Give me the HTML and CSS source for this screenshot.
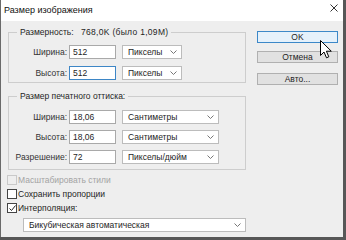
FILE: index.html
```html
<!DOCTYPE html>
<html lang="ru">

<head>
    <meta charset="UTF-8">
    <title>Размер изображения</title>
    <link rel="stylesheet" href="styles.css">
</head>

<body>
    <div class="window">
        <div class="titlebar">
            <span class="title">Размер изображения</span>
            <svg class="close" width="8" height="8" viewBox="0 0 8 8">
                <path d="M0.5 0.5 L7.5 7.5 M7.5 0.5 L0.5 7.5" stroke="#333" stroke-width="1"/>
            </svg>
        </div>

        <div class="content">
            <div class="left">
                <fieldset class="group group-size">
                    <legend><span class="legend-name">Размерность:</span><span class="legend-value">768,0K (было 1,09М)</span></legend>
                    <div class="rows">
                        <label class="lbl">Ширина:</label>
                        <input class="field" type="text" value="512">
                        <div class="select narrow"><span>Пикселы</span><svg width="7" height="4" viewBox="0 0 7 4"><path d="M0.5 0.5 L3.5 3.5 L6.5 0.5" fill="none" stroke="#777"/></svg></div>

                        <label class="lbl">Высота:</label>
                        <input class="field focused" type="text" value="512">
                        <div class="select narrow"><span>Пикселы</span><svg width="7" height="4" viewBox="0 0 7 4"><path d="M0.5 0.5 L3.5 3.5 L6.5 0.5" fill="none" stroke="#777"/></svg></div>
                    </div>
                </fieldset>

                <fieldset class="group group-print">
                    <legend>Размер печатного оттиска:</legend>
                    <div class="rows">
                        <label class="lbl">Ширина:</label>
                        <input class="field" type="text" value="18,06">
                        <div class="select wide"><span>Сантиметры</span><svg width="7" height="4" viewBox="0 0 7 4"><path d="M0.5 0.5 L3.5 3.5 L6.5 0.5" fill="none" stroke="#777"/></svg></div>

                        <label class="lbl">Высота:</label>
                        <input class="field" type="text" value="18,06">
                        <div class="select wide"><span>Сантиметры</span><svg width="7" height="4" viewBox="0 0 7 4"><path d="M0.5 0.5 L3.5 3.5 L6.5 0.5" fill="none" stroke="#777"/></svg></div>

                        <label class="lbl">Разрешение:</label>
                        <input class="field" type="text" value="72">
                        <div class="select wide"><span>Пикселы/дюйм</span><svg width="7" height="4" viewBox="0 0 7 4"><path d="M0.5 0.5 L3.5 3.5 L6.5 0.5" fill="none" stroke="#777"/></svg></div>
                    </div>
                </fieldset>

                <div class="checks">
                    <div class="check disabled"><span class="box"></span>Масштабировать стили</div>
                    <div class="check"><span class="box"></span>Сохранить пропорции</div>
                    <div class="check"><span class="box"><svg width="9" height="9" viewBox="0 0 9 9"><path d="M1.5 4.5 L3.5 6.5 L7.5 1.5" fill="none" stroke="#222" stroke-width="1"/></svg></span>Интерполяция:</div>
                </div>

                <div class="select interp"><span>Бикубическая автоматическая</span><svg width="7" height="4" viewBox="0 0 7 4"><path d="M0.5 0.5 L3.5 3.5 L6.5 0.5" fill="none" stroke="#777"/></svg></div>
            </div>

            <div class="buttons">
                <button class="btn default">OK</button>
                <button class="btn">Отмена</button>
                <button class="btn auto">Авто...</button>
            </div>
        </div>

        <svg class="cursor" width="13" height="19" viewBox="0 0 13 19">
            <path d="M0.5 0.5 L0.5 15.5 L4 12 L6.5 17.8 L8.8 16.8 L6.4 11.2 L11.3 11.2 Z" fill="#fff" stroke="#000" stroke-width="1"/>
        </svg>
    </div>
</body>

</html>
```

FILE: styles.css
```css
html, body {
    margin: 0;
    padding: 0;
}

body {
    width: 346px;
    height: 240px;
    background-color: #575757;
    font-family: "Liberation Sans", Arial, sans-serif;
    font-size: 8.5px;
    color: #1e1e1e;
    overflow: hidden;
}

.window {
    position: relative;
    width: 342px;
    height: 237px;
    border-left: 1px solid #6a6a6a;
    background-color: #eeeeee;
    display: flex;
    flex-direction: column;
}

.titlebar {
    height: 19px;
    background-color: #ffffff;
    display: flex;
    align-items: center;
    justify-content: space-between;
    padding: 0 4px 2px 3px;
}

.title {
    font-size: 9px;
    color: #111;
}

.close {
    margin-right: 1px;
    margin-top: -3px;
}

.content {
    display: flex;
    padding: 5px 0 0 7px;
}

.left {
    width: 238px;
    display: flex;
    flex-direction: column;
}

.group {
    margin: 0;
    padding: 0;
    min-width: 0;
    border: 1px solid #cdcdcd;
}

.group legend {
    margin-left: 8px;
    padding: 0 3px;
    line-height: 12px;
    height: 12px;
}

.legend-name {
    display: inline-block;
    width: 61px;
}

.legend-value {
    letter-spacing: 0.3px;
}

.rows {
    display: grid;
    grid-template-columns: 58px 47px auto;
    column-gap: 2px;
    align-items: center;
}

.rows .select {
    margin-left: 4px;
}

.group-size .rows {
    row-gap: 7px;
    padding: 7px 0 2px 0;
}

.group-print {
    margin-top: 7px;
}

.group-print .rows {
    row-gap: 6px;
    padding: 8px 0 5px 0;
}

.lbl {
    text-align: right;
    color: #333;
}

.field {
    box-sizing: border-box;
    width: 47px;
    height: 14px;
    margin: 0;
    padding: 0 3px;
    border: 1px solid #a9a9a9;
    background: #fff;
    font-family: inherit;
    font-size: 8.5px;
    color: #1e1e1e;
    outline: none;
}

.field.focused {
    border-color: #3d86c6;
}

.select {
    box-sizing: border-box;
    height: 14px;
    border: 1px solid #bcbcbc;
    background: #fff;
    display: flex;
    align-items: center;
    justify-content: space-between;
    padding: 0 4px 0 5px;
}

.select.narrow {
    width: 60px;
}

.select.wide {
    width: 97px;
}

.checks {
    margin-top: 3px;
    display: flex;
    flex-direction: column;
}

.check {
    height: 14px;
    display: flex;
    align-items: center;
    margin-left: -1px;
}

.check.disabled {
    color: #a3a3a3;
}

.box {
    box-sizing: border-box;
    width: 10px;
    height: 10px;
    border: 1px solid #444;
    background: #fff;
    margin-right: 1px;
    display: flex;
    align-items: center;
    justify-content: center;
}

.box svg {
    flex: none;
}

.check.disabled .box {
    border-color: #c9c9c9;
    background: #eeeeee;
}

.select.interp {
    margin: 3px 0 0 15px;
    width: 223px;
}

.buttons {
    margin-left: 11px;
    padding-top: 5px;
    display: flex;
    flex-direction: column;
}

.btn {
    box-sizing: border-box;
    width: 81px;
    height: 12px;
    margin: 0 0 8px 0;
    padding: 0;
    border: 1px solid #b0b0b0;
    background: #e1e1e1;
    font-family: inherit;
    font-size: 8.5px;
    line-height: 10px;
    color: #1e1e1e;
}

.btn.default {
    border-color: #3c88c8;
    background: #e5f1fb;
}

.btn.auto {
    margin-top: 2px;
}

.cursor {
    position: absolute;
    left: 319px;
    top: 40px;
}
```
